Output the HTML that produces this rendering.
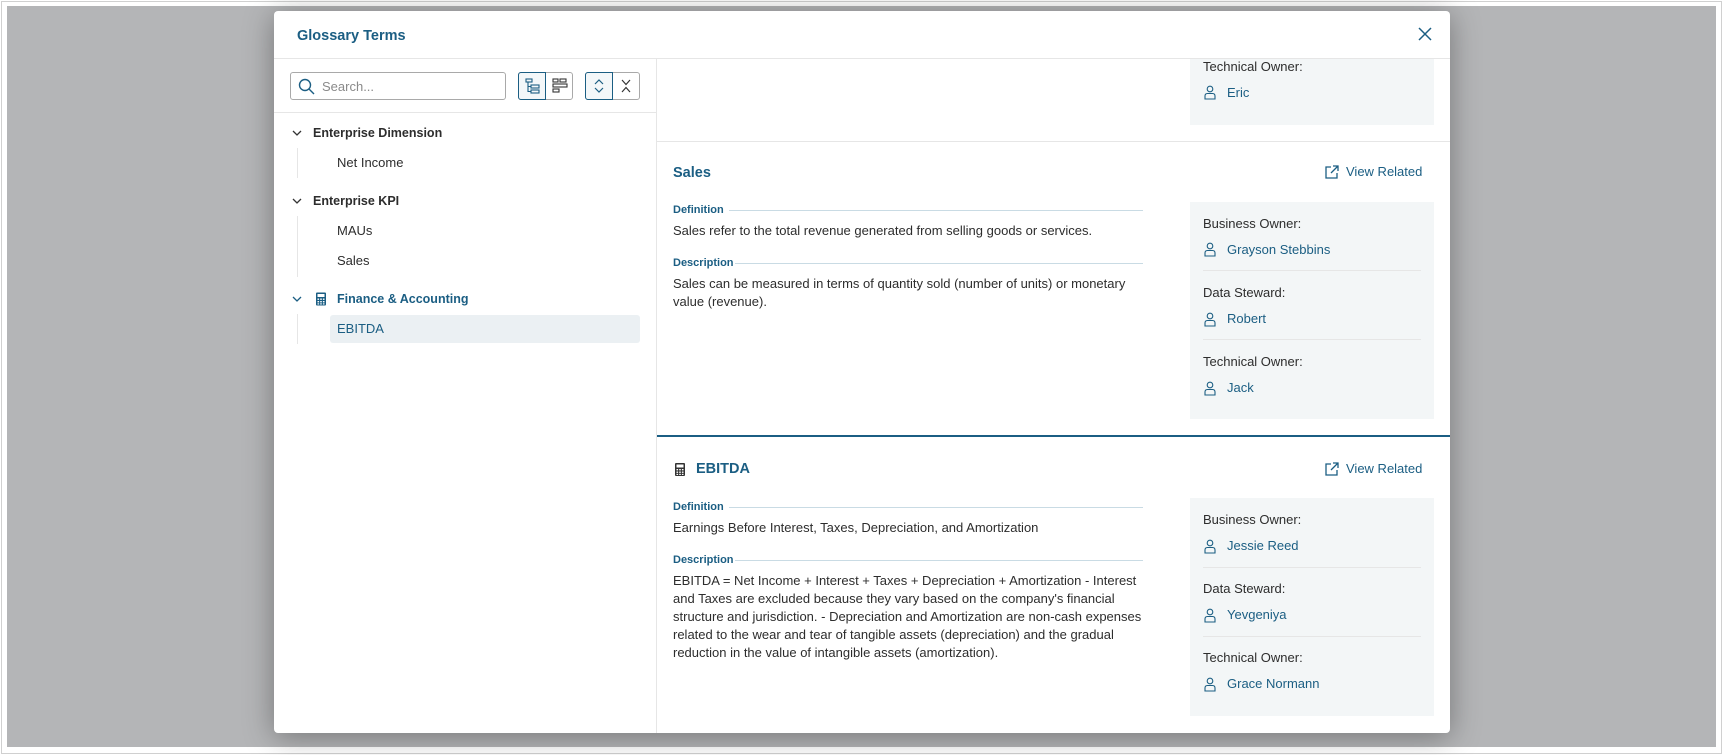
<!DOCTYPE html>
<html><head><meta charset="utf-8"><style>
*{margin:0;padding:0;box-sizing:border-box}
body{width:1723px;height:755px;background:#fff;position:relative;overflow:hidden;font-family:"Liberation Sans",sans-serif;color:#2d2d2d;font-size:13px}
.frame{position:absolute;left:1px;top:1px;width:1721px;height:753px;border:1px solid #d0d0d0}
.bg{position:absolute;left:7px;top:6px;width:1709px;height:741px;background:#b4b5b7}
.modal{position:absolute;left:274px;top:11px;width:1176px;height:722px;background:#fff;border-radius:4px;box-shadow:0 4px 30px rgba(0,0,0,.35);overflow:hidden}
.a{position:absolute;line-height:18px;white-space:nowrap}
.blue{color:#1b5e83}
.b{font-weight:bold}
.hl{position:absolute;background:#e6e6e6;height:1px}
.lbl{position:absolute;font-size:11px;font-weight:bold;color:#1b5e83;line-height:14px}
.gbox{position:absolute;background:#f3f6f7}
.ln{position:absolute;height:1px;background:#c9dbe4}
svg{position:absolute}
</style></head><body>
<div class="frame"></div>
<div class="bg"></div>
<div class="modal">
 <div class="a b blue" style="left:23px;top:16px;font-size:14.5px">Glossary Terms</div>
 <svg style="left:1144px;top:16px" width="14" height="14" viewBox="0 0 14 14"><path d="M1 1L13 13M13 1L1 13" stroke="#1b5e83" stroke-width="1.5"/></svg>
 <div class="hl" style="left:0;top:47px;width:1176px"></div>
 <div style="position:absolute;left:382px;top:48px;width:1px;height:674px;background:#e6e6e6"></div>
 <div style="position:absolute;left:16px;top:61px;width:216px;height:28px;border:1px solid #a9a9a9;border-radius:3px"></div>
 <svg style="left:24px;top:67px" width="17" height="17" viewBox="0 0 17 17"><circle cx="7" cy="7" r="5.5" fill="none" stroke="#1b5e83" stroke-width="1.4"/><path d="M11 11L16 16" stroke="#1b5e83" stroke-width="1.4"/></svg>
 <div class="a" style="left:48px;top:67px;color:#8a8a8a;font-size:13px">Search...</div>
 <div style="position:absolute;left:244px;top:61px;width:55px;height:28px;border:1px solid #a9a9a9;border-radius:3px"></div>
 <div style="position:absolute;left:244px;top:61px;width:28px;height:28px;border:1.5px solid #1b5e83;border-radius:3px 0 0 3px;background:#f3f7f9"></div>
 <svg style="left:251px;top:67px" width="16" height="16" viewBox="0 0 16 16" fill="none" stroke="#1b5e83" stroke-width="1.1"><rect x="1" y="1" width="6" height="3"/><rect x="6" y="7" width="8" height="3"/><rect x="6" y="12" width="8" height="3"/><path d="M3 4V13.5H6M3 8.5H6"/></svg>
 <svg style="left:278px;top:67px" width="16" height="16" viewBox="0 0 16 16" fill="none" stroke="#333" stroke-width="1.1"><rect x="1" y="1" width="5" height="3"/><rect x="8" y="1" width="6" height="3"/><rect x="1" y="6" width="14" height="3"/><rect x="1" y="11" width="6" height="3"/></svg>
 <div style="position:absolute;left:311px;top:61px;width:55px;height:28px;border:1px solid #a9a9a9;border-radius:3px"></div>
 <div style="position:absolute;left:311px;top:61px;width:28px;height:28px;border:1.5px solid #1b5e83;border-radius:3px 0 0 3px;background:#f3f7f9"></div>
 <svg style="left:319px;top:67px" width="12" height="16" viewBox="0 0 12 16" fill="none" stroke="#1b5e83" stroke-width="1.2"><path d="M2 6L6 2L10 6M2 10L6 14L10 10"/></svg>
 <svg style="left:346px;top:67px" width="12" height="16" viewBox="0 0 12 16" fill="none" stroke="#333" stroke-width="1.2"><path d="M2 2L6 6.5L10 2M2 14L6 9.5L10 14"/></svg>
 <div class="hl" style="left:0;top:101px;width:382px"></div>
 <svg style="left:18px;top:118px" width="10" height="8" viewBox="0 0 10 8"><path d="M1 2L5 6L9 2" fill="none" stroke="#333" stroke-width="1.3"/></svg>
 <div class="a b" style="left:39px;top:113px;font-size:12.5px">Enterprise Dimension</div>
 <div style="position:absolute;left:23px;top:137px;width:1px;height:30px;background:#e6e6e6"></div>
 <div class="a" style="left:63px;top:143px">Net Income</div>
 <svg style="left:18px;top:186px" width="10" height="8" viewBox="0 0 10 8"><path d="M1 2L5 6L9 2" fill="none" stroke="#333" stroke-width="1.3"/></svg>
 <div class="a b" style="left:39px;top:181px;font-size:12.5px">Enterprise KPI</div>
 <div style="position:absolute;left:23px;top:205px;width:1px;height:61px;background:#e6e6e6"></div>
 <div class="a" style="left:63px;top:211px">MAUs</div>
 <div class="a" style="left:63px;top:241px">Sales</div>
 <svg style="left:18px;top:284px" width="10" height="8" viewBox="0 0 10 8"><path d="M1 2L5 6L9 2" fill="none" stroke="#1b5e83" stroke-width="1.3"/></svg>
 <svg style="left:41px;top:281px" width="12" height="14" viewBox="0 0 12 14"><rect x="1" y="0.5" width="10" height="13" rx="1" fill="#1b5e83"/><rect x="2.5" y="2" width="7" height="3" fill="#fff"/><g fill="#fff"><rect x="2.5" y="6.5" width="1.6" height="1.4"/><rect x="5.2" y="6.5" width="1.6" height="1.4"/><rect x="7.9" y="6.5" width="1.6" height="1.4"/><rect x="2.5" y="9" width="1.6" height="1.4"/><rect x="5.2" y="9" width="1.6" height="1.4"/><rect x="7.9" y="9" width="1.6" height="1.4"/><rect x="2.5" y="11.3" width="1.6" height="1.2"/><rect x="5.2" y="11.3" width="1.6" height="1.2"/><rect x="7.9" y="11.3" width="1.6" height="1.2"/></g></svg>
 <div class="a b blue" style="left:63px;top:279px;font-size:12.5px">Finance &amp; Accounting</div>
 <div style="position:absolute;left:23px;top:303px;width:1px;height:30px;background:#e6e6e6"></div>
 <div style="position:absolute;left:56px;top:304px;width:310px;height:28px;background:#ebf0f3;border-radius:3px"></div>
 <div class="a blue" style="left:63px;top:309px">EBITDA</div>

 <div class="gbox" style="left:916px;top:48px;width:244px;height:66px"></div>
 <div class="a" style="left:929px;top:47px">Technical Owner:</div>
 <svg style="left:930px;top:74px" width="12" height="15" viewBox="0 0 12 15" fill="none" stroke="#1b5e83" stroke-width="1.1"><circle cx="6" cy="4" r="2.8"/><path d="M1 14V11Q1 8.5 3.5 8.5H8.5Q11 8.5 11 11V14Z"/></svg>
 <div class="a blue" style="left:953px;top:73px">Eric</div>
 <div class="hl" style="left:383px;top:130px;width:793px"></div>

 <div class="a b blue" style="left:399px;top:153px;font-size:14.5px">Sales</div>
 <svg style="left:1050px;top:153px" width="16" height="16" viewBox="0 0 16 16" fill="none" stroke="#1b5e83" stroke-width="1.3"><path d="M7 3H2V14H13V9M9 2H14V7M14 2L7 9"/></svg>
 <div class="a blue" style="left:1072px;top:152px">View Related</div>
 <div class="lbl" style="left:399px;top:192px">Definition</div>
 <div class="ln" style="left:455px;top:199px;width:414px"></div>
 <div class="a" style="left:399px;top:211px">Sales refer to the total revenue generated from selling goods or services.</div>
 <div class="lbl" style="left:399px;top:245px">Description</div>
 <div class="ln" style="left:461px;top:252px;width:408px"></div>
 <div class="a" style="left:399px;top:264px">Sales can be measured in terms of quantity sold (number of units) or monetary</div>
 <div class="a" style="left:399px;top:282px">value (revenue).</div>
 <div class="gbox" style="left:916px;top:191px;width:244px;height:217px"></div>
 <div class="a" style="left:929px;top:204px">Business Owner:</div>
 <svg style="left:930px;top:231px" width="12" height="15" viewBox="0 0 12 15" fill="none" stroke="#1b5e83" stroke-width="1.1"><circle cx="6" cy="4" r="2.8"/><path d="M1 14V11Q1 8.5 3.5 8.5H8.5Q11 8.5 11 11V14Z"/></svg>
 <div class="a blue" style="left:953px;top:230px">Grayson Stebbins</div>
 <div class="hl" style="left:929px;top:259px;width:218px"></div>
 <div class="a" style="left:929px;top:273px">Data Steward:</div>
 <svg style="left:930px;top:301px" width="12" height="15" viewBox="0 0 12 15" fill="none" stroke="#1b5e83" stroke-width="1.1"><circle cx="6" cy="4" r="2.8"/><path d="M1 14V11Q1 8.5 3.5 8.5H8.5Q11 8.5 11 11V14Z"/></svg>
 <div class="a blue" style="left:953px;top:299px">Robert</div>
 <div class="hl" style="left:929px;top:328px;width:218px"></div>
 <div class="a" style="left:929px;top:342px">Technical Owner:</div>
 <svg style="left:930px;top:370px" width="12" height="15" viewBox="0 0 12 15" fill="none" stroke="#1b5e83" stroke-width="1.1"><circle cx="6" cy="4" r="2.8"/><path d="M1 14V11Q1 8.5 3.5 8.5H8.5Q11 8.5 11 11V14Z"/></svg>
 <div class="a blue" style="left:953px;top:368px">Jack</div>

 <div style="position:absolute;left:383px;top:424px;width:793px;height:2px;background:#1b5e83"></div>

 <svg style="left:400px;top:451px" width="12" height="15" viewBox="0 0 12 14"><rect x="1" y="0.5" width="10" height="13" rx="1" fill="#333"/><rect x="2.5" y="2" width="7" height="3" fill="#fff"/><g fill="#fff"><rect x="2.5" y="6.5" width="1.6" height="1.4"/><rect x="5.2" y="6.5" width="1.6" height="1.4"/><rect x="7.9" y="6.5" width="1.6" height="1.4"/><rect x="2.5" y="9" width="1.6" height="1.4"/><rect x="5.2" y="9" width="1.6" height="1.4"/><rect x="7.9" y="9" width="1.6" height="1.4"/><rect x="2.5" y="11.3" width="1.6" height="1.2"/><rect x="5.2" y="11.3" width="1.6" height="1.2"/><rect x="7.9" y="11.3" width="1.6" height="1.2"/></g></svg>
 <div class="a b blue" style="left:422px;top:449px;font-size:14.5px">EBITDA</div>
 <svg style="left:1050px;top:450px" width="16" height="16" viewBox="0 0 16 16" fill="none" stroke="#1b5e83" stroke-width="1.3"><path d="M7 3H2V14H13V9M9 2H14V7M14 2L7 9"/></svg>
 <div class="a blue" style="left:1072px;top:449px">View Related</div>
 <div class="lbl" style="left:399px;top:489px">Definition</div>
 <div class="ln" style="left:455px;top:496px;width:414px"></div>
 <div class="a" style="left:399px;top:508px">Earnings Before Interest, Taxes, Depreciation, and Amortization</div>
 <div class="lbl" style="left:399px;top:542px">Description</div>
 <div class="ln" style="left:461px;top:549px;width:408px"></div>
 <div class="a" style="left:399px;top:561px">EBITDA = Net Income + Interest + Taxes + Depreciation + Amortization - Interest</div>
 <div class="a" style="left:399px;top:579px">and Taxes are excluded because they vary based on the company's financial</div>
 <div class="a" style="left:399px;top:597px">structure and jurisdiction. - Depreciation and Amortization are non-cash expenses</div>
 <div class="a" style="left:399px;top:615px">related to the wear and tear of tangible assets (depreciation) and the gradual</div>
 <div class="a" style="left:399px;top:633px">reduction in the value of intangible assets (amortization).</div>
 <div class="gbox" style="left:916px;top:487px;width:244px;height:218px"></div>
 <div class="a" style="left:929px;top:500px">Business Owner:</div>
 <svg style="left:930px;top:528px" width="12" height="15" viewBox="0 0 12 15" fill="none" stroke="#1b5e83" stroke-width="1.1"><circle cx="6" cy="4" r="2.8"/><path d="M1 14V11Q1 8.5 3.5 8.5H8.5Q11 8.5 11 11V14Z"/></svg>
 <div class="a blue" style="left:953px;top:526px">Jessie Reed</div>
 <div class="hl" style="left:929px;top:556px;width:218px"></div>
 <div class="a" style="left:929px;top:569px">Data Steward:</div>
 <svg style="left:930px;top:597px" width="12" height="15" viewBox="0 0 12 15" fill="none" stroke="#1b5e83" stroke-width="1.1"><circle cx="6" cy="4" r="2.8"/><path d="M1 14V11Q1 8.5 3.5 8.5H8.5Q11 8.5 11 11V14Z"/></svg>
 <div class="a blue" style="left:953px;top:595px">Yevgeniya</div>
 <div class="hl" style="left:929px;top:625px;width:218px"></div>
 <div class="a" style="left:929px;top:638px">Technical Owner:</div>
 <svg style="left:930px;top:666px" width="12" height="15" viewBox="0 0 12 15" fill="none" stroke="#1b5e83" stroke-width="1.1"><circle cx="6" cy="4" r="2.8"/><path d="M1 14V11Q1 8.5 3.5 8.5H8.5Q11 8.5 11 11V14Z"/></svg>
 <div class="a blue" style="left:953px;top:664px">Grace Normann</div>
</div>
</body></html>
